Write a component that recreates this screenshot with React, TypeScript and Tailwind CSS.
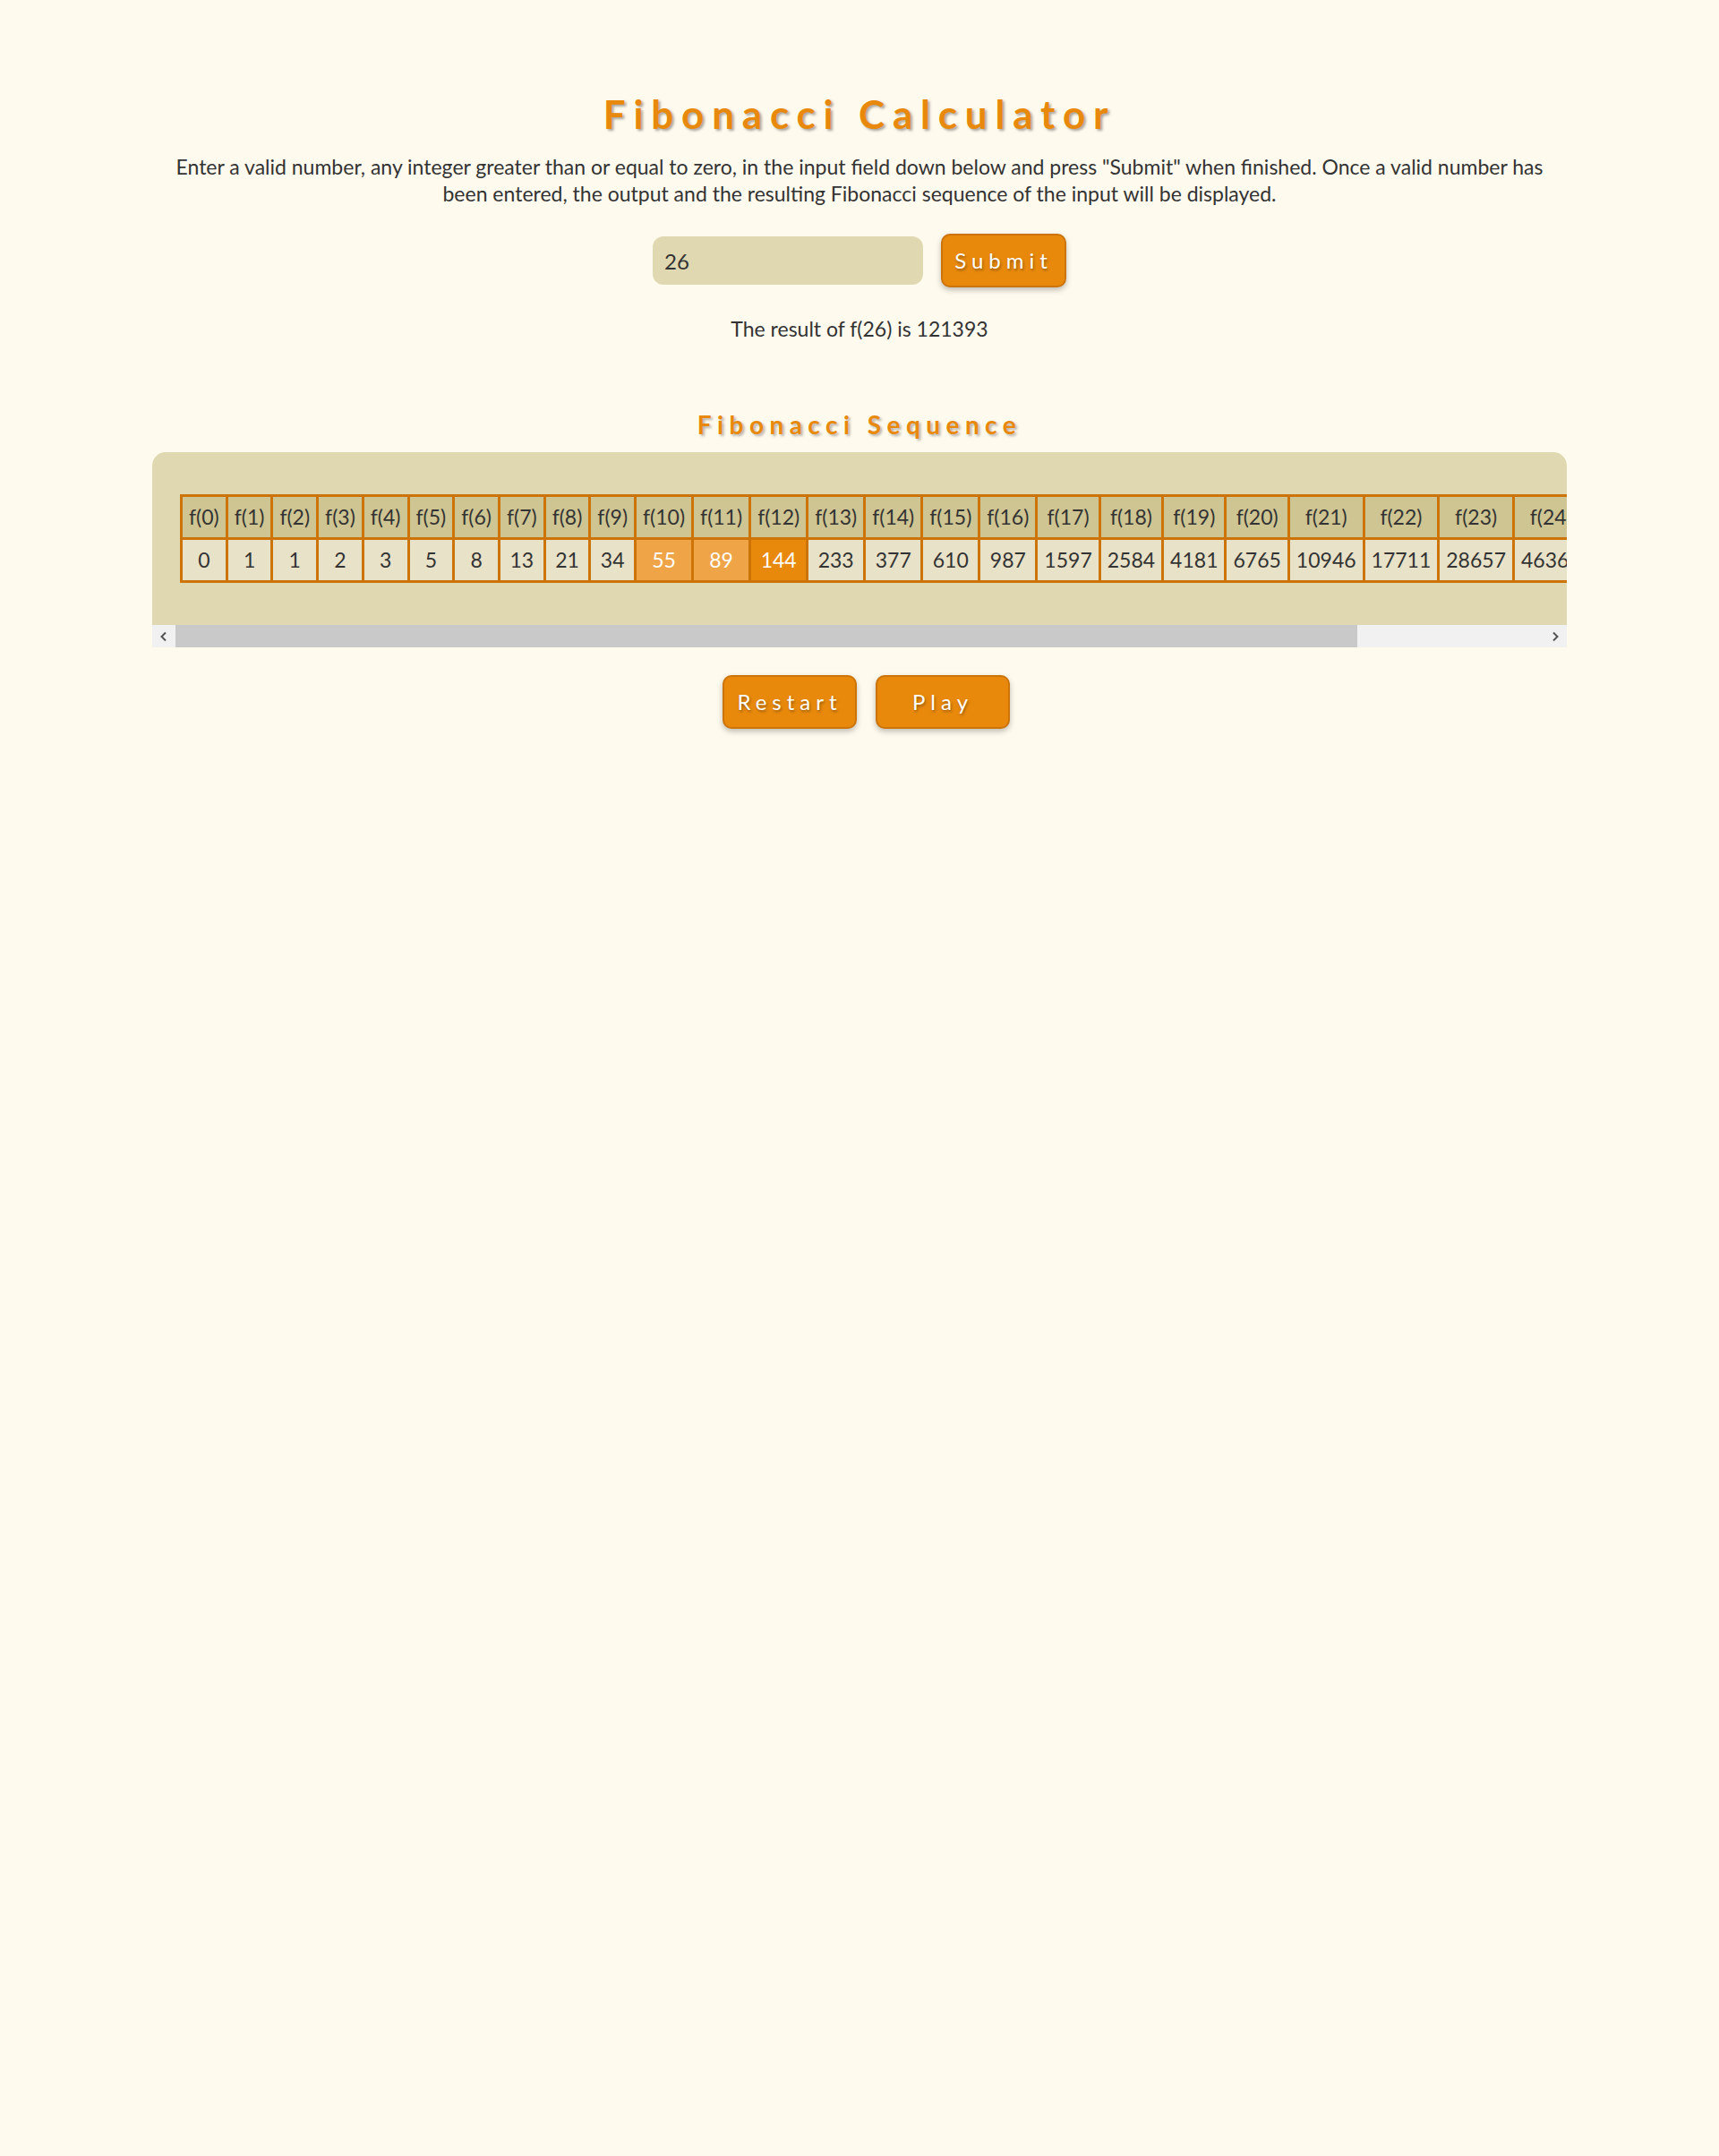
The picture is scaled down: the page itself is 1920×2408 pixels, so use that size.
import React from "react";

const fib: number[] = [];
for (let i = 0; i <= 26; i++) {
  fib.push(i < 2 ? i : fib[i - 1] + fib[i - 2]);
}

const cellBase = "border-[3px] border-[#cc7408] px-[7px] py-2 text-center font-normal";

function valueClass(i: number) {
  if (i === 12) return "bg-[#e8890c] text-white font-bold";
  if (i === 10 || i === 11) return "bg-[#eea447] text-white font-bold";
  return "bg-[#e8e2c8]";
}

const App: React.FC = () => {
  return (
    <div className="min-h-[2408px] bg-[#fffaee] font-['Lato',sans-serif] text-[#333] pt-[99px]">
      <h1 className="text-center text-[44px] leading-[56px] font-bold tracking-[0.2em] text-[#e8890c] [text-shadow:2px_2px_3px_rgba(0,0,0,0.35)]">
        Fibonacci Calculator
      </h1>
      <p className="mx-auto mt-[16px] w-[1580px] text-center text-[23px] leading-[30px]">
        Enter a valid number, any integer greater than or equal to zero, in the input field down below and press "Submit" when finished. Once a valid number has been entered, the output and the resulting Fibonacci sequence of the input will be displayed.
      </p>

      <div className="mt-[30px] flex items-center justify-center gap-[20px]">
        <input
          type="text"
          defaultValue="26"
          className="h-[54px] w-[302px] rounded-[12px] bg-[#e0d8b0] px-[13px] text-[24px] text-[#333] outline-none"
        />
        <button className="h-[60px] w-[140px] rounded-[10px] border-2 border-[#cc7408] bg-[#e8890c] text-[24px] tracking-[0.25em] text-white shadow-[0_3px_6px_rgba(0,0,0,0.25)] [text-shadow:1px_2px_3px_rgba(0,0,0,0.35)]">
          Submit
        </button>
      </div>

      <p className="mt-[31px] text-center text-[23px] leading-[30px]">The result of f(26) is 121393</p>

      <h2 className="mt-[74px] text-center text-[28px] leading-[36px] font-bold tracking-[0.23em] text-[#e8890c] [text-shadow:2px_2px_3px_rgba(0,0,0,0.3)]">
        Fibonacci Sequence
      </h2>

      <div className="mx-auto mt-[13px] w-[1580px]">
        <div className="overflow-hidden rounded-t-[15px] bg-[#e0d8b0] pb-[47px] pl-[31px] pt-[47px]">
          <table className="border-collapse whitespace-nowrap text-[23px] leading-[29px]">
            <thead>
              <tr>
                {fib.map((_, i) => (
                  <th key={i} className={`${cellBase} bg-[#cfc592]`}>
                    f({i})
                  </th>
                ))}
              </tr>
            </thead>
            <tbody>
              <tr>
                {fib.map((v, i) => (
                  <td key={i} className={`${cellBase} ${valueClass(i)}`}>
                    {v}
                  </td>
                ))}
              </tr>
            </tbody>
          </table>
        </div>
        <div className="flex h-[25px] items-stretch bg-[#f1f1f1]">
          <div className="flex w-[26px] items-center justify-center text-[#555]">
            <svg width="10" height="12" viewBox="0 0 10 12" fill="none">
              <path d="M7 1.5 L2.5 6 L7 10.5" stroke="currentColor" strokeWidth="2" />
            </svg>
          </div>
          <div className="w-[1320px] bg-[#c9c9c9]" />
          <div className="flex-1" />
          <div className="flex w-[26px] items-center justify-center text-[#555]">
            <svg width="10" height="12" viewBox="0 0 10 12" fill="none">
              <path d="M3 1.5 L7.5 6 L3 10.5" stroke="currentColor" strokeWidth="2" />
            </svg>
          </div>
        </div>
      </div>

      <div className="mt-[31px] flex justify-center gap-[21px] pl-[15px]">
        <button className="h-[60px] w-[150px] rounded-[10px] border-2 border-[#cc7408] bg-[#e8890c] text-[24px] tracking-[0.25em] text-white shadow-[0_3px_6px_rgba(0,0,0,0.25)] [text-shadow:1px_2px_3px_rgba(0,0,0,0.35)]">
          Restart
        </button>
        <button className="h-[60px] w-[150px] rounded-[10px] border-2 border-[#cc7408] bg-[#e8890c] text-[24px] tracking-[0.25em] text-white shadow-[0_3px_6px_rgba(0,0,0,0.25)] [text-shadow:1px_2px_3px_rgba(0,0,0,0.35)]">
          Play
        </button>
      </div>
    </div>
  );
};

export default App;
